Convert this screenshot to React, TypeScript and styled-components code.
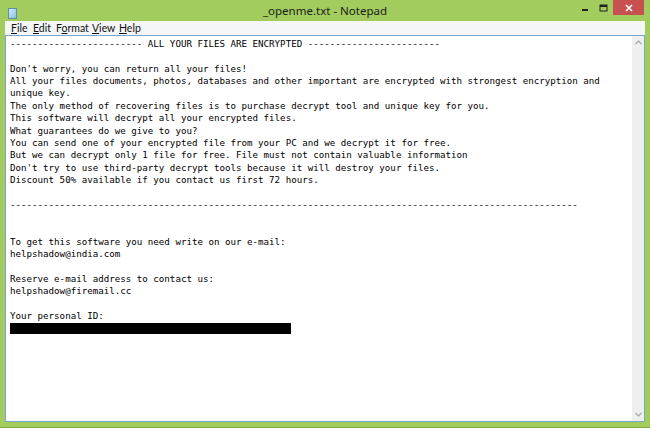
import React from "react";
import styled, { createGlobalStyle } from "styled-components";

const Global = createGlobalStyle`
  html, body { margin: 0; padding: 0; background: #a3cd5f; }
  #root { width: 650px; height: 428px; }
`;

const Window = styled.div`
  width: 650px;
  height: 428px;
  box-sizing: border-box;
  background: #a2cc5e;
  border-bottom: 1px solid #84ad4a;
  display: flex;
  flex-direction: column;
  overflow: hidden;
`;

const TitleBar = styled.div`
  height: 21px;
  flex: none;
  display: grid;
  grid-template-columns: 1fr auto 1fr;
  align-items: start;
`;

const IconSlot = styled.div`
  padding: 5px 0 0 8px;
`;

const Title = styled.div`
  font-family: "Noto Sans", "Open Sans", sans-serif;
  font-size: 11.5px;
  line-height: 22px;
  color: #1b1b1b;
`;

const Controls = styled.div`
  justify-self: end;
  display: flex;
  align-items: flex-start;
  margin-right: 6px;
`;

const CtrlButton = styled.div<{ $close?: boolean }>`
  width: ${(p) => (p.$close ? "31px" : "19px")};
  height: 15px;
  background: ${(p) => (p.$close ? "#c75050" : "transparent")};
  display: flex;
  align-items: center;
  justify-content: center;
`;

const Client = styled.div`
  flex: 1;
  display: flex;
  flex-direction: column;
  margin: 0 5px 5px 5px;
  min-height: 0;
`;

const MenuBar = styled.div`
  height: 14px;
  flex: none;
  background: #f5f6f7;
  display: flex;
  align-items: center;
  padding-left: 6px;
  font-family: "Lato", "Noto Sans", sans-serif;
  font-size: 10.5px;
  color: #111;
`;

const MenuItem = styled.span<{ $w: number }>`
  width: ${(p) => p.$w}px;
  flex: none;
  white-space: nowrap;
  line-height: 14px;
  u { text-decoration: underline; text-underline-offset: 1px; }
`;

const EditArea = styled.div`
  flex: 1;
  display: flex;
  border: 1px solid #78a6cf;
  background: #fff;
  min-height: 0;
`;

const TextBody = styled.pre`
  flex: 1;
  margin: 0;
  padding: 2px 0 0 4px;
  font-family: "DejaVu Sans Mono", "Liberation Mono", monospace;
  font-size: 9.17px;
  line-height: 12.36px;
  color: #000;
  white-space: pre;
  overflow: hidden;
`;

const Redacted = styled.span`
  display: block;
  width: 281px;
  height: 11px;
  margin-top: 1px;
  background: #000;
`;

const ScrollBar = styled.div`
  width: 12px;
  flex: none;
  background: #efefef;
  display: flex;
  flex-direction: column;
  justify-content: space-between;
  align-items: center;
  padding: 4px 0 4px;
`;

const NotepadIcon = () => (
  <svg width="9" height="11" viewBox="0 0 9 11">
    <defs>
      <linearGradient id="np" x1="0" y1="0" x2="1" y2="1">
        <stop offset="0" stopColor="#d8eef8" />
        <stop offset="1" stopColor="#7fc0dc" />
      </linearGradient>
    </defs>
    <rect x="0.5" y="0.5" width="8" height="10" fill="url(#np)" stroke="#5c8fa8" strokeWidth="1" />
  </svg>
);

const dashes = (n: number) => "-".repeat(n);

const text = [
  `${dashes(24)} ALL YOUR FILES ARE ENCRYPTED ${dashes(24)}`,
  ``,
  `Don't worry, you can return all your files!`,
  `All your files documents, photos, databases and other important are encrypted with strongest encryption and`,
  `unique key.`,
  `The only method of recovering files is to purchase decrypt tool and unique key for you.`,
  `This software will decrypt all your encrypted files.`,
  `What guarantees do we give to you?`,
  `You can send one of your encrypted file from your PC and we decrypt it for free.`,
  `But we can decrypt only 1 file for free. File must not contain valuable information`,
  `Don't try to use third-party decrypt tools because it will destroy your files.`,
  `Discount 50% available if you contact us first 72 hours.`,
  ``,
  dashes(103),
  ``,
  ``,
  `To get this software you need write on our e-mail:`,
  `helpshadow@india.com`,
  ``,
  `Reserve e-mail address to contact us:`,
  `helpshadow@firemail.cc`,
  ``,
  `Your personal ID:`,
].join("\n");

export default function App() {
  return (
    <>
      <Global />
      <Window>
        <TitleBar>
          <IconSlot>
            <NotepadIcon />
          </IconSlot>
          <Title>_openme.txt - Notepad</Title>
          <Controls>
            <CtrlButton>
              <svg width="8" height="8" viewBox="0 0 8 8">
                <rect x="1" y="5" width="6" height="2" fill="#222" />
              </svg>
            </CtrlButton>
            <CtrlButton>
              <svg width="9" height="8" viewBox="0 0 9 8">
                <rect x="1" y="1" width="7" height="6" fill="none" stroke="#222" strokeWidth="1" />
                <rect x="1" y="1" width="7" height="2" fill="#222" />
              </svg>
            </CtrlButton>
            <CtrlButton $close>
              <svg width="8" height="8" viewBox="0 0 8 8">
                <path d="M1 1 L7 7 M7 1 L1 7" stroke="#fff" strokeWidth="1.6" />
              </svg>
            </CtrlButton>
          </Controls>
        </TitleBar>
        <Client>
          <MenuBar>
            <MenuItem $w={22}><u>F</u>ile</MenuItem>
            <MenuItem $w={23}><u>E</u>dit</MenuItem>
            <MenuItem $w={36}>F<u>o</u>rmat</MenuItem>
            <MenuItem $w={27}><u>V</u>iew</MenuItem>
            <MenuItem $w={30}><u>H</u>elp</MenuItem>
          </MenuBar>
          <EditArea>
            <TextBody>
              {text}
              <Redacted />
            </TextBody>
            <ScrollBar>
              <svg width="7" height="5" viewBox="0 0 7 5">
                <path d="M0.5 4 L3.5 1 L6.5 4" fill="none" stroke="#a6a6a6" strokeWidth="1.2" />
              </svg>
              <svg width="7" height="5" viewBox="0 0 7 5">
                <path d="M0.5 1 L3.5 4 L6.5 1" fill="none" stroke="#a6a6a6" strokeWidth="1.2" />
              </svg>
            </ScrollBar>
          </EditArea>
        </Client>
      </Window>
    </>
  );
}
